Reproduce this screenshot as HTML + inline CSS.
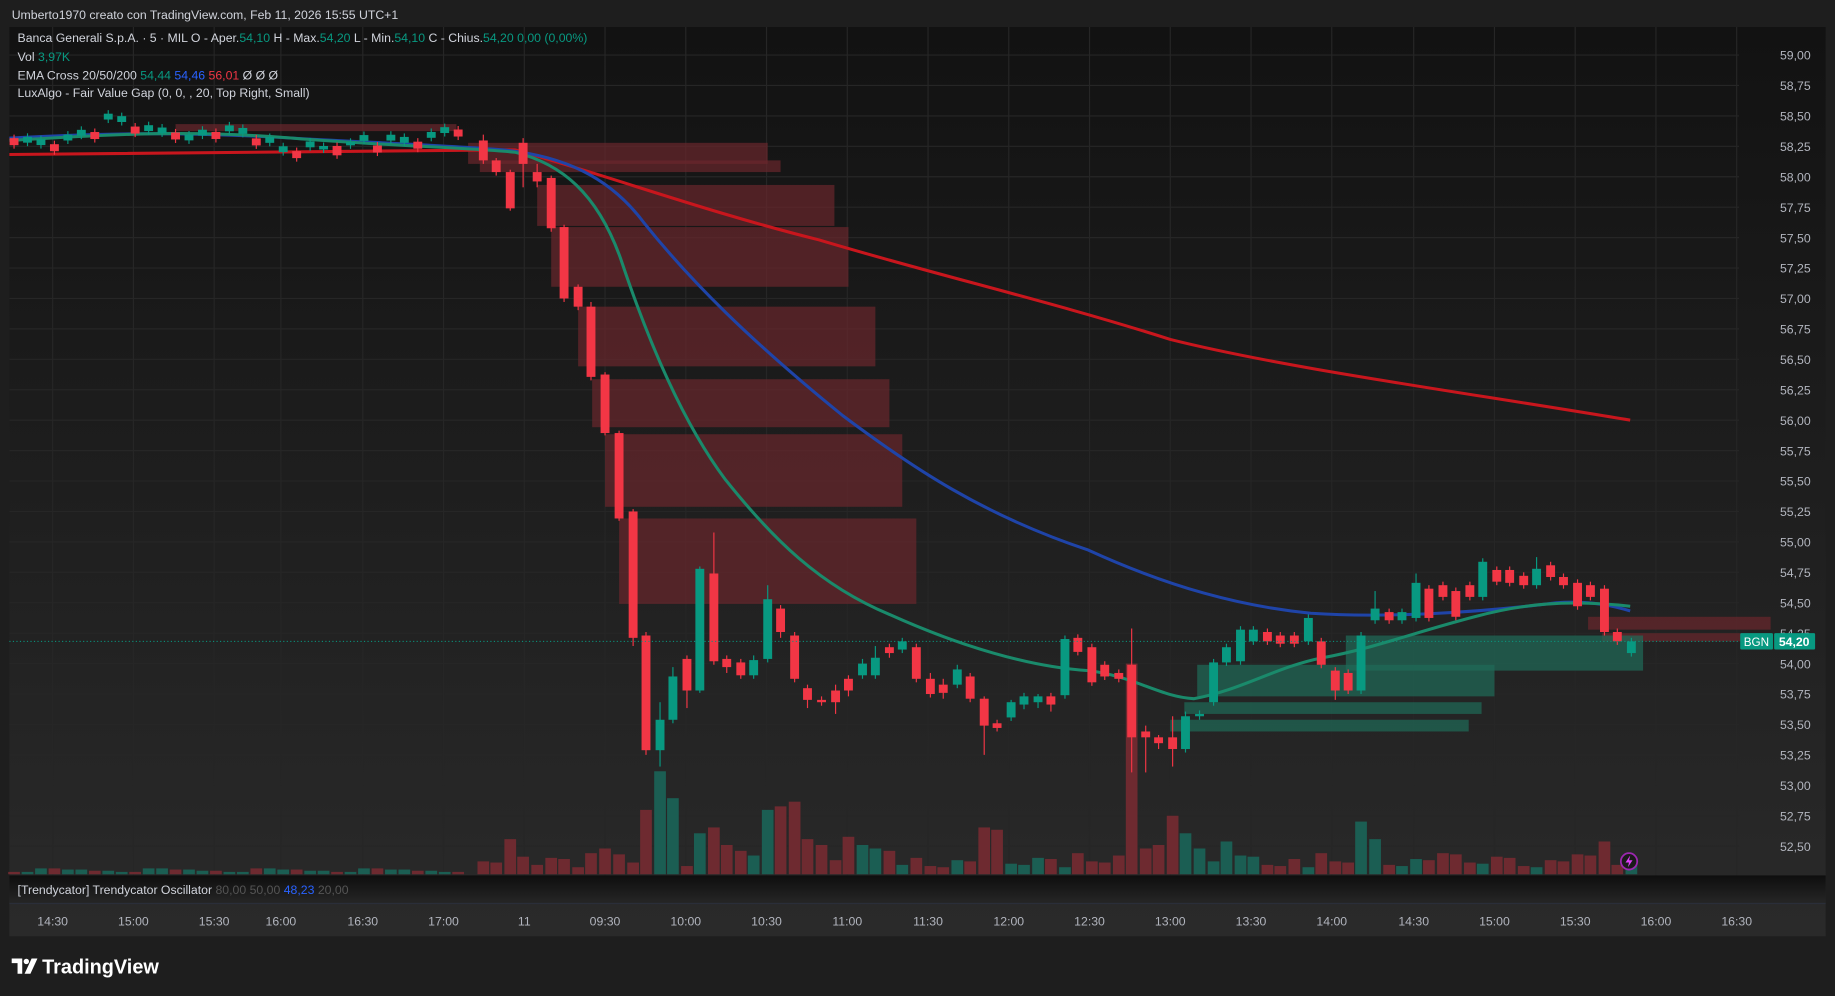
<!DOCTYPE html>
<html><head><meta charset="utf-8"><style>
html,body{margin:0;padding:0;background:#1e1e1e;width:1835px;height:996px;overflow:hidden}
svg{display:block}
text{font-family:"Liberation Sans","DejaVu Sans",sans-serif}
</style></head><body>
<svg id="s" width="1835" height="996" viewBox="0 0 1568 851" xmlns="http://www.w3.org/2000/svg">
<defs>
<linearGradient id="bg" x1="0" y1="0" x2="0" y2="1"><stop offset="0" stop-color="#121212"/><stop offset="1" stop-color="#2a2a2a"/></linearGradient>
<linearGradient id="osc" x1="0" y1="0" x2="0" y2="1"><stop offset="0" stop-color="#0e0e0e"/><stop offset="1" stop-color="#262626"/></linearGradient>
</defs>
<rect width="1568" height="851" fill="#1e1e1e"/>
<text x="10" y="16" font-size="10.5" fill="#d1d4dc">Umberto1970 creato con TradingView.com, Feb 11, 2026 15:55 UTC+1</text>
<rect x="8" y="23" width="1552" height="777" fill="url(#bg)"/>
<g id="grid" stroke="#262626" stroke-width="1"></g>
<g id="fvg"></g>
<g id="vol"></g>
<g id="lines" fill="none" stroke-width="2.6">
<path d="M8,132 L440,128 C520,150 600,180 700,205 C800,235 900,258 1000,290 C1100,315 1250,335 1393,359" stroke="#c8161d"/>
<path d="M8,118 C80,114 150,112 250,118 C320,122 380,124 430,128 C480,133 520,150 550,190 C590,240 640,290 720,355 C780,400 840,440 930,470 C1000,502 1060,518 1120,524 C1180,528 1260,524 1330,515 C1360,513 1380,518 1393,522" stroke="#1f44a8"/>
<path d="M8,120 C80,116 150,110 250,118 C320,124 400,126 440,130 C480,140 510,165 530,220 C560,310 590,370 620,410 C660,460 700,500 760,525 C820,552 880,570 930,573 C970,578 990,595 1020,597 C1060,590 1090,570 1130,562 C1170,555 1210,540 1260,527 C1300,516 1340,512 1393,518" stroke="#1a8a6b"/>
</g>
<g id="cndl"></g>
<line x1="8" y1="548" x2="1486" y2="548" stroke="#089981" stroke-dasharray="1,2" stroke-width="0.8"/>
<g id="axis" font-size="10.5" fill="#b2b5be"></g>
<rect x="1487" y="541" width="28" height="14" fill="#089981" rx="1"/>
<rect x="1516" y="541" width="35" height="14" fill="#089981" rx="1"/>
<text x="1490" y="552" font-size="10" fill="#fff">BGN</text>
<text x="1520" y="552" font-size="10.5" fill="#fff" font-weight="bold">54,20</text>
<circle cx="1392" cy="736" r="7" fill="#1a1a1a" stroke="#9c27b0" stroke-width="1.5"/>
<path d="M1393,731 L1389,737 L1392,737 L1391,741 L1395,735 L1392,735 Z" fill="#e040fb"/>
<rect x="8" y="748" width="1552" height="24" fill="url(#osc)"/>
<line x1="8" y1="772" x2="1560" y2="772" stroke="#2a2e39"/>
<text x="15" y="764" font-size="10.5" fill="#d1d4dc">[Trendycator] Trendycator Oscillator <tspan fill="#555">80,00</tspan> <tspan fill="#555">50,00</tspan> <tspan fill="#2962ff">48,23</tspan> <tspan fill="#555">20,00</tspan></text>
<g id="time" font-size="10.5" fill="#b2b5be" text-anchor="middle"></g>
<text x="15" y="31" font-size="10.5" fill="#d1d4dc" dy="5">Banca Generali S.p.A. · 5 · MIL  O - Aper.<tspan fill="#089981">54,10</tspan>  H - Max.<tspan fill="#089981">54,20</tspan>  L - Min.<tspan fill="#089981">54,10</tspan>  C - Chius.<tspan fill="#089981">54,20</tspan>  <tspan fill="#089981">0,00 (0,00%)</tspan></text>
<text x="15" y="52" font-size="10.5" fill="#d1d4dc">Vol  <tspan fill="#089981">3,97K</tspan></text>
<text x="15" y="68" font-size="10.5" fill="#d1d4dc">EMA Cross 20/50/200  <tspan fill="#089981">54,44</tspan>  <tspan fill="#2962ff">54,46</tspan>  <tspan fill="#f23645">56,01</tspan>  Ø  Ø  Ø</text>
<text x="15" y="83" font-size="10.5" fill="#d1d4dc">LuxAlgo - Fair Value Gap (0, 0, , 20, Top Right, Small)</text>
<path d="M10,819 H19 V832 H15 V823 H10 Z" fill="#fff"/><circle cx="22.5" cy="821.5" r="2.3" fill="#fff"/><path d="M27,819 H32 L26,832 H21 Z" fill="#fff"/>
<text x="36" y="832" font-size="17" font-weight="bold" fill="#fff">TradingView</text>
</svg>
<script>
var NS="http://www.w3.org/2000/svg";
function el(p,t,a){var e=document.createElementNS(NS,t);for(var k in a)e.setAttribute(k,a[k]);document.getElementById(p).appendChild(e);return e;}
for(var i=0;i<27;i++){var y=47+i*26;el("grid","line",{x1:8,y1:y,x2:1486,y2:y});
var p=(59-i*0.25).toFixed(2).replace(".",",");var t=el("axis","text",{x:1521,y:y+4});t.textContent=p;}
var tl=[[45,"14:30"],[114,"15:00"],[183,"15:30"],[240,"16:00"],[310,"16:30"],[379,"17:00"],[448,"11"],[517,"09:30"],[586,"10:00"],[655,"10:30"],[724,"11:00"],[793,"11:30"],[862,"12:00"],[931,"12:30"],[1000,"13:00"],[1069,"13:30"],[1138,"14:00"],[1208,"14:30"],[1277,"15:00"],[1346,"15:30"],[1415,"16:00"],[1484,"16:30"]];
tl.forEach(function(a){el("grid","line",{x1:a[0],y1:23,x2:a[0],y2:748});var t=el("time","text",{x:a[0],y:791});t.textContent=a[1];});
[[150,106,390,112],[400,122,656,140],[410,137,667,147],[459,158,713,193],[471,194,725,245],[494,262,748,313],[506,324,760,365],[517,371,771,433],[529,443,783,516],[1357,527,1513,538],[1369,541,1513,548]].forEach(function(b){el("fvg","rect",{x:b[0],y:b[1],width:b[2]-b[0],height:b[3]-b[1],fill:"#6a262c",opacity:0.7});});
[[1150,543,1404,573],[1023,568,1277,595],[1012,600,1266,610],[1000,615,1255,625]].forEach(function(b){el("fvg","rect",{x:b[0],y:b[1],width:b[2]-b[0],height:b[3]-b[1],fill:"#1f6b58",opacity:0.7});});
var C=[[413,120,137,115,140],[424,137,147,135,150],[436,147,178,145,180],[447,122,140,118,160],[459,147,155,140,160],[471,152,195,150,198],[482,194,255,192,258],[494,245,262,243,265],[505,262,322,258,325],[517,320,370,318,372],[529,370,443,368,445],[541,437,545,435,552],[552,543,641,540,645],[564,641,615,600,655],[575,615,578,570,618],[587,563,590,560,605],[598,590,486,484,592],[610,490,565,455,568],[621,563,570,560,575],[633,566,577,563,580],[644,577,564,560,580],[656,563,512,500,566],[667,520,540,517,545],[679,543,580,540,583],[690,588,598,585,605],[702,598,600,595,603],[714,590,600,585,610],[725,580,590,577,595],[737,577,567,563,580],[748,577,562,552,580],[760,553,558,550,562],[771,555,548,545,558],[783,553,580,550,583],[795,580,593,575,596],[806,585,592,580,597],[818,585,572,568,588],[829,578,597,575,600],[841,597,620,595,645],[852,618,622,615,625],[864,613,600,598,616],[875,602,595,592,606],[887,600,595,593,605],[898,595,602,592,608],[910,594,546,543,597],[921,545,557,542,560],[933,553,583,550,586],[944,568,578,565,581],[956,575,580,572,583],[967,568,630,537,660],[979,625,630,620,660],[990,630,635,628,640],[1002,630,640,612,655],[1013,640,612,608,643],[1025,612,610,607,615],[1037,600,566,563,603],[1048,566,553,550,569],[1060,565,538,535,568],[1071,548,538,535,551],[1083,540,548,537,551],[1094,543,550,540,553],[1106,543,550,540,553],[1118,548,528,525,551],[1129,548,568,545,571],[1141,573,590,570,598],[1152,575,590,572,593],[1163,590,543,540,593],[1175,530,520,505,533],[1187,523,530,520,533],[1198,530,523,520,533],[1210,528,498,490,531],[1221,503,528,500,531],[1233,500,510,497,513],[1244,505,527,502,530],[1256,500,510,497,513],[1267,510,480,477,513],[1279,487,497,484,500],[1290,487,498,484,501],[1302,492,500,489,503],[1313,500,486,476,503],[1325,483,493,480,496],[1336,493,500,490,503],[1348,498,518,495,521],[1359,500,510,497,513],[1371,503,540,500,543],[1382,540,548,537,551],[1394,558,548,545,561]];
for(var x=12,k=0;x<400;x+=11.5,k++){var o=118+6*Math.sin(k*0.7)+(x>240?6:0)+(x>330?-8:0);var c=o+(k%3==0?6:-5);if(x>90&&x<160){o-=10;c-=10;}if(x>270&&x<310){o+=6;c+=8;}C.unshift([x,o,c,Math.min(o,c)-3,Math.max(o,c)+3]);}
C.forEach(function(c){var up=c[2]<c[1];var col=up?"#089981":"#f23645";el("cndl","line",{x1:c[0],y1:c[3],x2:c[0],y2:c[4],stroke:col,"stroke-width":1});var t=Math.min(c[1],c[2]),h=Math.max(1.5,Math.abs(c[2]-c[1]));el("cndl","rect",{x:c[0]-3.8,y:t,width:7.6,height:h,fill:col});});
var spikes={436:30,501:25,517:22,540:40,552:55,564:88,575:65,598:35,610:40,621:25,633:20,656:55,667:58,679:62,690:30,702:25,725:32,737:25,748:22,760:20,841:40,852:38,967:180,979:22,990:25,1002:50,1013:35,1025:22,1048:28,1125:100,1163:45,1175:30,1371:28};
C.forEach(function(c){var up=c[2]<c[1];var h=spikes[c[0]];if(!h){var n=Math.round(c[0]);h=spikes[n]||(c[0]<400?2+(n%4):6+(n*7%13));}
el("vol","rect",{x:c[0]-5,y:747-h,width:10,height:h,fill:up?"#1b5e53":"#6e2a30"});});
</script>
</body></html>
